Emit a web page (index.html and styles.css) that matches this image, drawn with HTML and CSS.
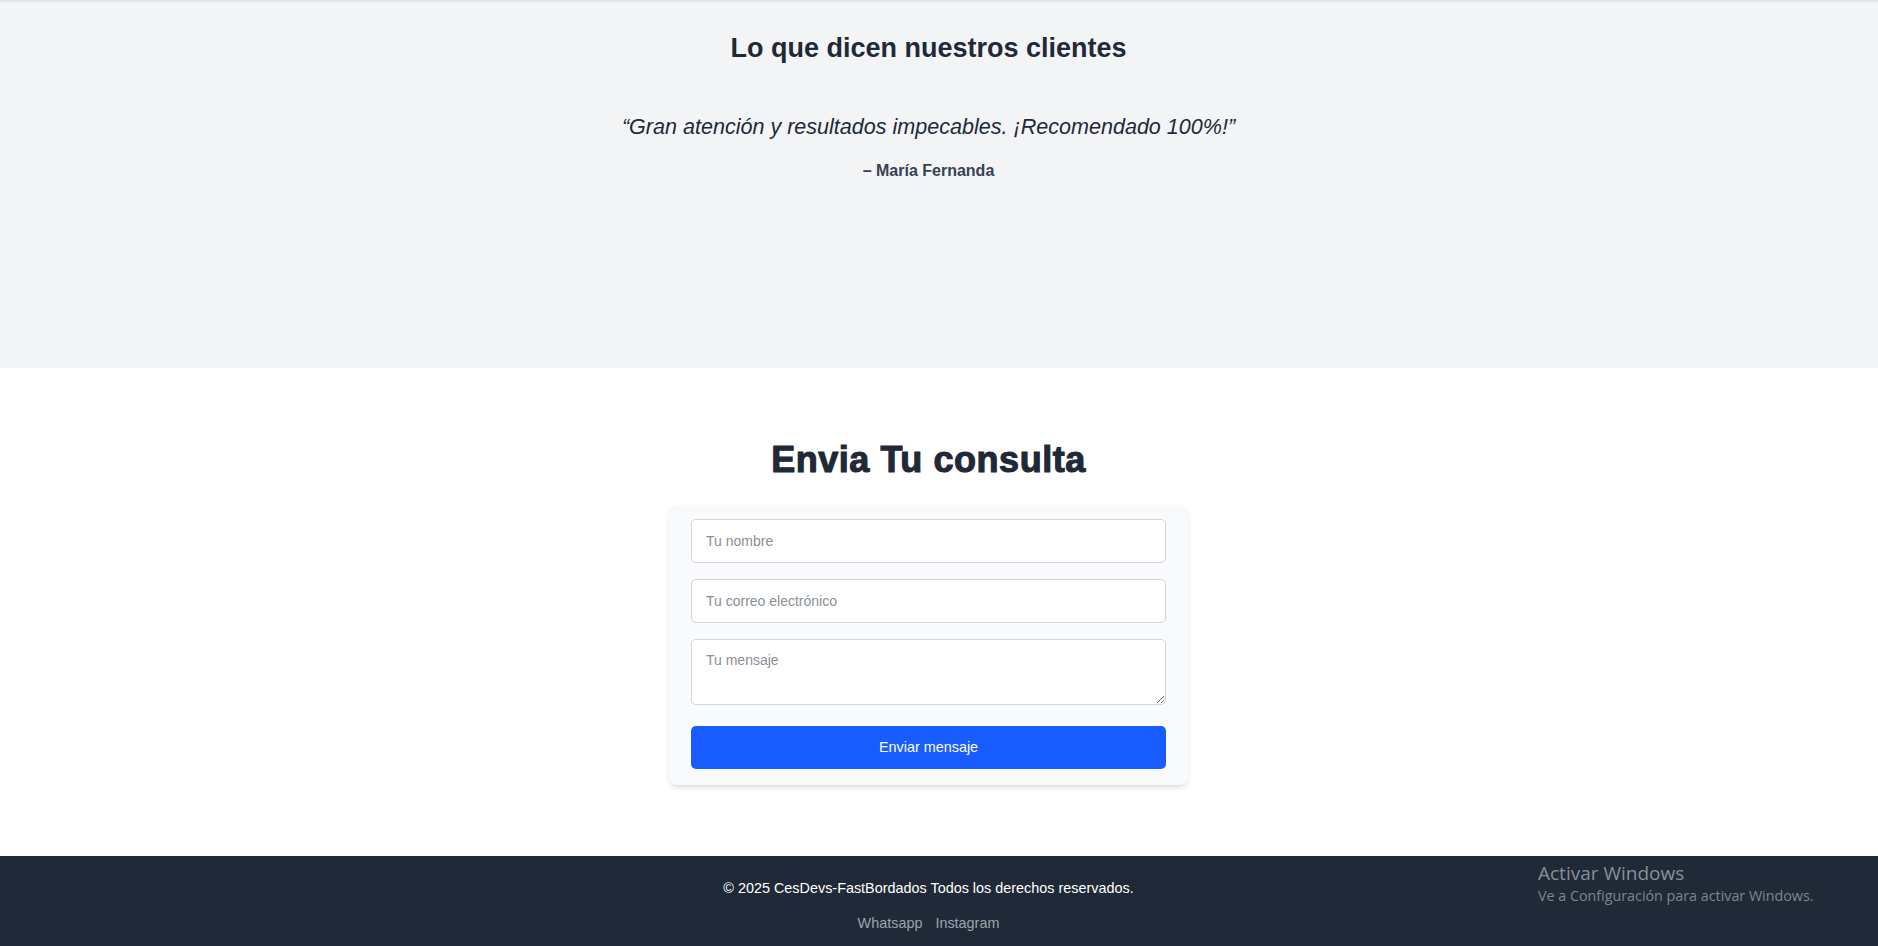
FILE: index.html
```html
<!DOCTYPE html>
<html lang="es">
<head>
<meta charset="utf-8">
<title>CesDevs-FastBordados</title>
<link rel="stylesheet" href="styles.css">
</head>
<body>
  <section class="testimonials">
    <div class="inner">
      <h2 class="testimonials-title">Lo que dicen nuestros clientes</h2>
      <blockquote class="quote">“Gran atención y resultados impecables. ¡Recomendado 100%!”</blockquote>
      <p class="author">– María Fernanda</p>
    </div>
  </section>

  <section class="contact">
    <div class="inner">
      <h2 class="contact-title">Envia Tu consulta</h2>
      <form class="contact-form">
        <input class="field" type="text" placeholder="Tu nombre">
        <input class="field" type="email" placeholder="Tu correo electrónico">
        <textarea class="field field-area" placeholder="Tu mensaje"></textarea>
        <button class="submit" type="button">Enviar mensaje</button>
      </form>
    </div>
  </section>

  <footer class="footer">
    <div class="inner">
      <p class="copy">© 2025 CesDevs-FastBordados Todos los derechos reservados.</p>
      <nav class="footer-links">
        <a href="#" class="footer-link">Whatsapp</a>
        <a href="#" class="footer-link">Instagram</a>
      </nav>
    </div>
    <div class="win-watermark">
      <div class="win-title">Activar Windows</div>
      <div class="win-sub">Ve a Configuración para activar Windows.</div>
    </div>
  </footer>
</body>
</html>
```

FILE: styles.css
```css
* { box-sizing: border-box; }

html, body {
  margin: 0;
  padding: 0;
}

body {
  font-family: "Liberation Sans", Arial, sans-serif;
  color: #1f2937;
  background: #ffffff;
}

.inner {
  padding-right: 21px;
  display: flex;
  flex-direction: column;
  align-items: center;
  text-align: center;
}

/* Testimonials */
.testimonials {
  background: #f3f4f6;
  border-top: 2px solid #e3e5e8;
  height: 368px;
  padding-top: 30px;
}

.testimonials-title {
  margin: 0;
  font-size: 27px;
  line-height: 32px;
  font-weight: 700;
  color: #1f2937;
}

.quote {
  margin: 49px 0 0;
  font-size: 21.55px;
  line-height: 28px;
  font-style: italic;
  color: #1f2937;
}

.author {
  margin: 18px 0 0;
  font-size: 16px;
  line-height: 24px;
  font-weight: 700;
  color: #374151;
}

/* Contact */
.contact {
  background: #ffffff;
  padding: 72px 0 71px;
}

.contact-title {
  margin: 0;
  font-size: 36px;
  line-height: 40px;
  font-weight: 700;
  color: #1f2937;
  -webkit-text-stroke: 1.1px #1f2937;
  letter-spacing: 0.55px;
}

.contact-form {
  margin-top: 25px;
  width: 519px;
  background: #f9fafb;
  border-radius: 8px;
  box-shadow: 0 4px 6px -1px rgba(0, 0, 0, 0.1), 0 2px 4px -2px rgba(0, 0, 0, 0.08);
  padding: 14px 22px 16px;
  display: flex;
  flex-direction: column;
  gap: 16px;
}

.field {
  display: block;
  width: 100%;
  height: 44px;
  border: 1px solid #d1d5db;
  border-radius: 5px;
  background: #ffffff;
  padding: 0 14px;
  font-family: "Liberation Sans", Arial, sans-serif;
  font-size: 14px;
  color: #1f2937;
  outline: none;
}

.field::placeholder {
  color: #8b8f97;
}

.field-area {
  height: 66px;
  padding: 11px 14px;
  line-height: 18px;
  resize: vertical;
}

.submit {
  margin-top: 5px;
  height: 43px;
  width: 100%;
  border: none;
  border-radius: 5px;
  background: #185cff;
  color: #ffffff;
  font-family: "Liberation Sans", Arial, sans-serif;
  font-size: 14.4px;
  line-height: 18px;
  padding: 0 0 2px;
  cursor: pointer;
}

/* Footer */
.footer {
  position: relative;
  background: #1f2937;
  color: #ffffff;
  height: 91px;
  padding-top: 22px;
}

.copy {
  margin: 0;
  font-size: 14.4px;
  line-height: 20px;
  color: #ffffff;
}

.footer-links {
  margin-top: 15px;
  display: flex;
  gap: 13px;
}

.footer-link {
  font-size: 14.4px;
  line-height: 20px;
  color: #9ca3af;
  text-decoration: none;
}

.win-watermark {
  position: absolute;
  left: 1538px;
  top: 5px;
  font-family: "Open Sans", "Noto Sans", sans-serif;
  color: #8a8f98;
}

.win-title {
  font-size: 19px;
  line-height: 24px;
}

.win-sub {
  font-size: 14.3px;
  line-height: 22px;
  color: #7f858e;
}
```
